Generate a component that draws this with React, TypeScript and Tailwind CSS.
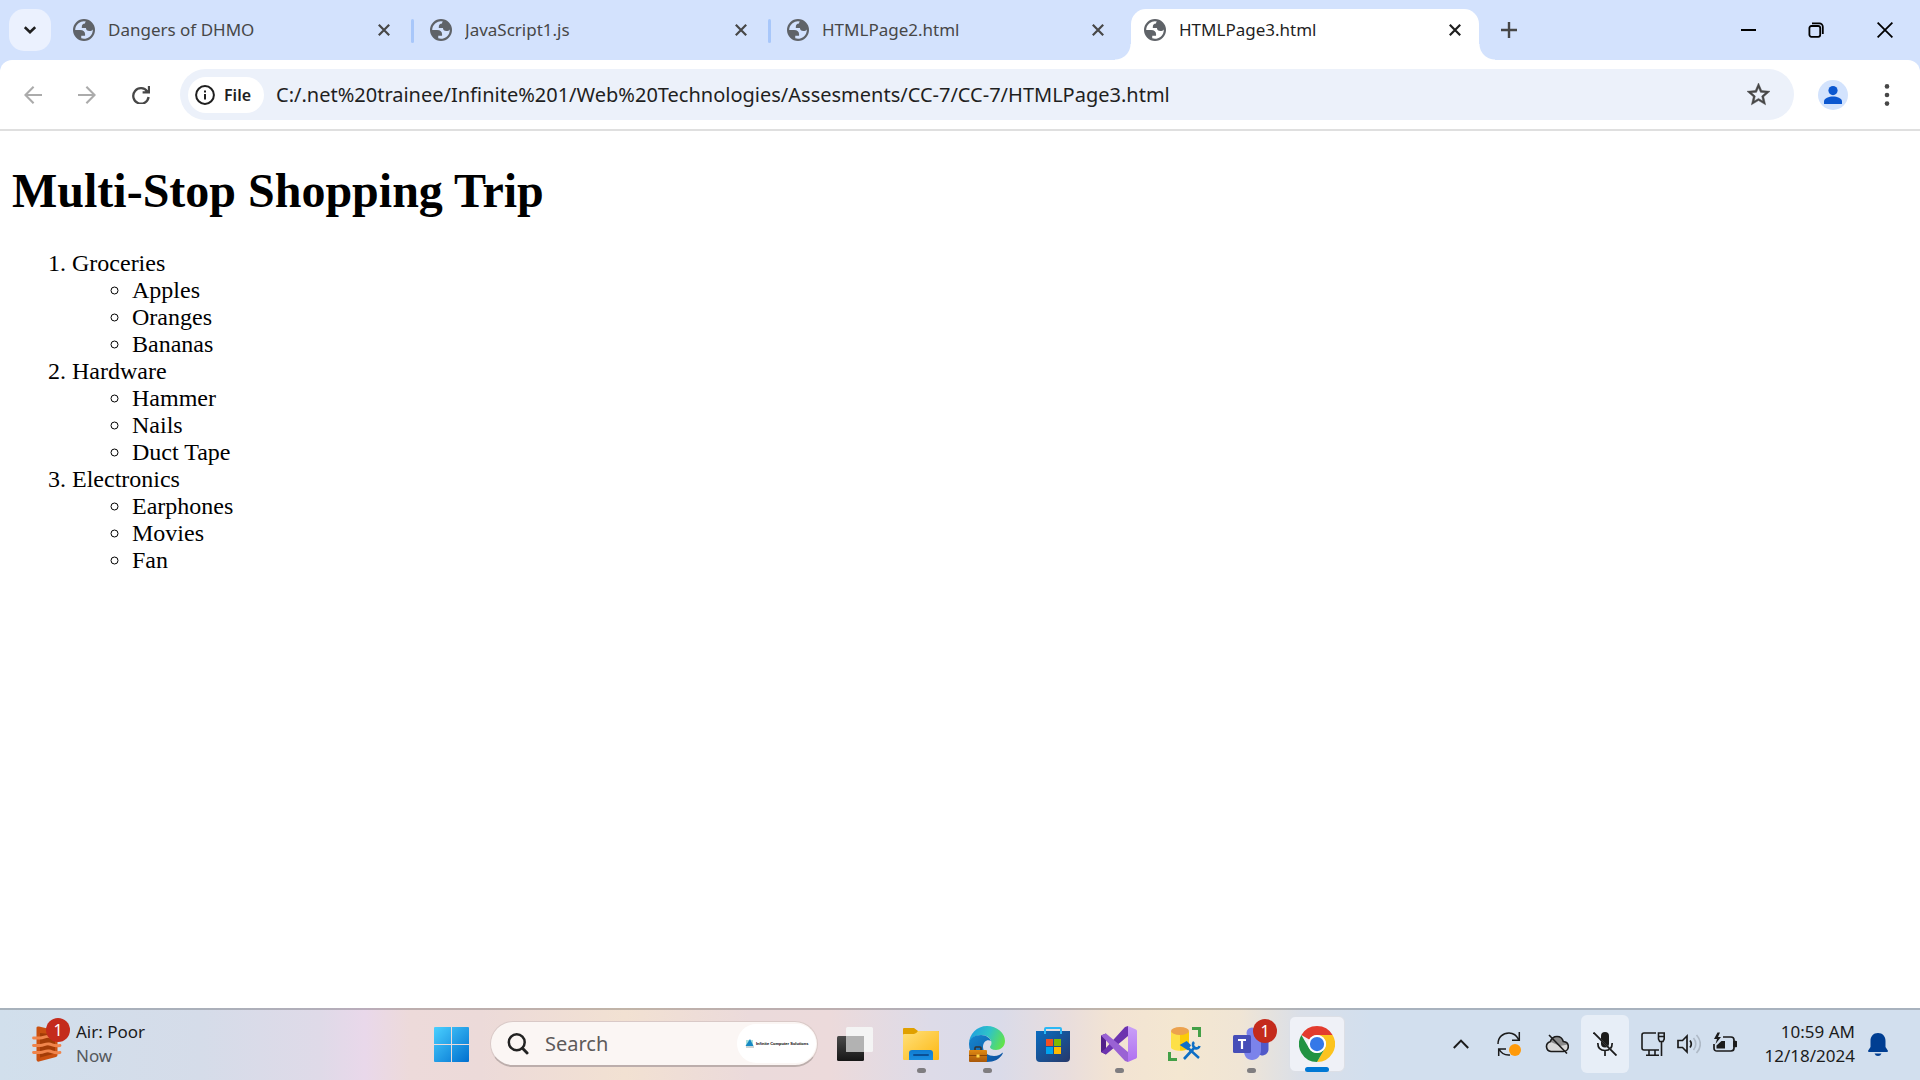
import React from "react";

const sans = "font-['Noto_Sans','Open_Sans',sans-serif]";

function Globe() {
  return (
    <svg viewBox="2 2 20 20" className="size-[22px] shrink-0" fill="#5f6368" fillRule="evenodd" aria-hidden="true">
      <path d="M12 2a10 10 0 1 0 0 20 10 10 0 0 0 0-20zM4 12h4.4c3.407.022 4.922 1.73 4.543 5.127H9.488v2.47a8.004 8.004 0 0 0 10.498-8.083C19.327 12.504 18.332 13 17 13c-2.137 0-3.206-.916-3.206-2.75h-3.748c-.274-2.728.683-4.092 2.87-4.092 0-.975.327-1.597.811-1.97A8.004 8.004 0 0 0 4 12z" />
    </svg>
  );
}

function Cross() {
  return (
    <svg viewBox="0 0 12 12" className="size-3" fill="none" stroke="currentColor" strokeWidth="2.2" aria-hidden="true">
      <path d="M.8.8l10.4 10.4M11.2.8L.8 11.2" />
    </svg>
  );
}

type TabProps = { title: string; active?: boolean; divider?: boolean };

function Tab({ title, active, divider }: TabProps) {
  return (
    <div
      className={
        active
          ? "relative flex w-[348px] items-center rounded-t-[15px] bg-white pb-[9px] pl-[13px] pr-3 text-[#1f1f1f]"
          : "relative flex w-[357px] items-center pb-[9px] pl-[13px] pr-[21px] text-[#474747]"
      }
    >
      <Globe />
      <span className="ml-[13px] flex-1 truncate text-[17px] leading-6">{title}</span>
      <button aria-label={`Close ${title}`} className="flex size-6 items-center justify-center">
        <Cross />
      </button>
      {divider && <span className="absolute right-[3px] top-[10px] h-6 w-[3px] rounded-full bg-[#a8c7fa]" />}
      {active && (
        <>
          <span className="absolute -left-4 bottom-0 size-4 bg-[radial-gradient(circle_at_0_0,transparent_15px,#fff_16px)]" />
          <span className="absolute -right-4 bottom-0 size-4 bg-[radial-gradient(circle_at_100%_0,transparent_15px,#fff_16px)]" />
        </>
      )}
    </div>
  );
}

function TabStrip() {
  return (
    <div className="flex h-[60px] pt-[9px]">
      <button aria-label="Search tabs" className="ml-[9px] flex size-[42px] items-center justify-center rounded-[15px] bg-[#ebf1fe]">
        <svg viewBox="0 0 12 8" className="h-2 w-3" fill="none" stroke="#1f1f1f" strokeWidth="2.6">
          <path d="M.8 1.2L6 6.2l5.2-5" />
        </svg>
      </button>
      <div className="ml-[9px] flex">
        <Tab title="Dangers of DHMO" divider />
        <Tab title="JavaScript1.js" divider />
        <Tab title="HTMLPage2.html" />
        <Tab title="HTMLPage3.html" active />
      </div>
      <button aria-label="New tab" className="ml-[9px] flex size-[42px] items-center justify-center">
        <svg viewBox="0 0 16 16" className="size-4" stroke="#474747" strokeWidth="2.4">
          <path d="M8 0v16M0 8h16" />
        </svg>
      </button>
      <div className="ml-auto -mt-[9px] flex h-[60px]">
        <button aria-label="Minimize" className="flex w-[68px] items-center justify-center">
          <span className="h-[2px] w-[15px] bg-black" />
        </button>
        <button aria-label="Restore" className="flex w-[68px] items-center justify-center">
          <svg viewBox="0 0 16 16" className="size-4" fill="none" stroke="#000" strokeWidth="1.8">
            <rect x="1.4" y="4" width="10.8" height="10.8" rx="2" />
            <path d="M4 1.4h7.4a3.4 3.4 0 0 1 3.4 3.4V12" />
          </svg>
        </button>
        <button aria-label="Close" className="flex w-[70px] items-center justify-center">
          <svg viewBox="0 0 16 16" className="size-4" stroke="#000" strokeWidth="1.8">
            <path d="M.6.6l14.8 14.8M15.4.6L.6 15.4" />
          </svg>
        </button>
      </div>
    </div>
  );
}

function Toolbar() {
  return (
    <div className="flex h-[71px] items-center rounded-t-[12px] border-b-2 border-[#dfdfdf] bg-white pl-[6px]">
      <button aria-label="Back" className="flex w-[54px] justify-center text-[#ababab]">
        <svg viewBox="0 0 18 18" className="size-[18px]" fill="none" stroke="currentColor" strokeWidth="2.1">
          <path d="M18 9H1.8M9.6.8L1.4 9l8.2 8.2" />
        </svg>
      </button>
      <button aria-label="Forward" className="flex w-[54px] justify-center text-[#ababab]">
        <svg viewBox="0 0 18 18" className="size-[18px]" fill="none" stroke="currentColor" strokeWidth="2.1">
          <path d="M0 9h16.2M8.4.8L16.6 9l-8.2 8.2" />
        </svg>
      </button>
      <button aria-label="Reload" className="flex w-[54px] justify-center text-[#474747]">
        <svg viewBox="0 0 18 18" className="size-[18px]" fill="none" stroke="currentColor" strokeWidth="2.3">
          <path d="M15.3 5.5A7.7 7.7 0 1 0 16.6 11M17 0v6.4h-6.4" />
        </svg>
      </button>
      <div className="ml-3 flex h-[51px] flex-1 items-center rounded-full bg-[#ecf1fa] pl-2 pr-[18px]">
        <button className="flex h-9 w-[76px] items-center rounded-full bg-white pl-[7px] text-base font-semibold text-[#1f1f1f]">
          <svg viewBox="0 0 20 20" className="mr-[9px] size-5" fill="none" stroke="#1f1f1f" strokeWidth="2">
            <circle cx="10" cy="10" r="8.9" />
            <path d="M10 9v5.6M10 5.4v2" />
          </svg>
          File
        </button>
        <input
          aria-label="Address"
          className="ml-3 min-w-0 flex-1 bg-transparent text-[20px] text-[#1f1f1f] outline-none"
          defaultValue="C:/.net%20trainee/Infinite%201/Web%20Technologies/Assesments/CC-7/CC-7/HTMLPage3.html"
        />
        <button aria-label="Bookmark this tab" className="flex size-9 items-center justify-center">
          <svg viewBox="2 2 20 20" className="size-[23px]" fill="#474747" stroke="#474747" strokeWidth=".4">
            <path d="M22 9.24l-7.19-.62L12 2 9.19 8.63 2 9.24l5.46 4.73L5.82 21 12 17.27 18.18 21l-1.63-7.03L22 9.24zM12 15.4l-3.76 2.27 1-4.28-3.32-2.88 4.38-.38L12 6.1l1.71 4.04 4.38.38-3.32 2.88 1 4.28L12 15.4z" />
          </svg>
        </button>
      </div>
      <button aria-label="Profile" className="ml-6 flex size-[30px] items-center justify-center rounded-full bg-[#d3e3fd]">
        <svg viewBox="0 0 18 18" className="size-[18px]" fill="#0b57d0">
          <circle cx="9" cy="4.6" r="4.6" />
          <path d="M0 18v-2.8C0 12 5 10.4 9 10.4s9 1.6 9 4.8V18z" />
        </svg>
      </button>
      <button aria-label="Menu" className="ml-[21px] mr-[15px] flex w-9 justify-center">
        <svg viewBox="0 0 6 22" className="h-[22px] w-[6px]" fill="#474747">
          <circle cx="3" cy="2.4" r="2.3" />
          <circle cx="3" cy="11" r="2.3" />
          <circle cx="3" cy="19.6" r="2.3" />
        </svg>
      </button>
    </div>
  );
}

const stops = [
  { name: "Groceries", items: ["Apples", "Oranges", "Bananas"] },
  { name: "Hardware", items: ["Hammer", "Nails", "Duct Tape"] },
  { name: "Electronics", items: ["Earphones", "Movies", "Fan"] },
];

function Page() {
  return (
    <main className="flex-1 bg-white px-3 py-8 font-['Liberation_Serif',serif] text-2xl leading-[27px] text-black">
      <h1 className="mb-8 text-5xl font-bold leading-[55px]">Multi-Stop Shopping Trip</h1>
      <ol className="list-decimal pl-[60px]">
        {stops.map((s) => (
          <li key={s.name}>
            {s.name}
            <ul className="list-[circle] pl-[60px]">
              {s.items.map((i) => (
                <li key={i}>{i}</li>
              ))}
            </ul>
          </li>
        ))}
      </ol>
    </main>
  );
}

function Badge() {
  return <span className="absolute flex size-6 items-center justify-center rounded-full bg-[#c42b1c] text-base leading-6 text-white">1</span>;
}

function TaskButton({ label, running, children }: { label: string; running?: boolean; children: React.ReactNode }) {
  return (
    <button aria-label={label} className="relative flex w-[66px] items-center justify-center">
      {children}
      {running && <span className="absolute bottom-[5px] h-[5px] w-[9px] rounded-full bg-[#7f7d80]" />}
    </button>
  );
}

const icon = "size-9";

function Taskbar() {
  return (
    <footer className="flex h-[72px] border-t-2 border-black/20 bg-[linear-gradient(90deg,#d1dfec_0,#d5dce9_200px,#dfdae8_320px,#e9d8ea_365px,#eddada_410px,#ecdad9_480px,#f2e1d2_625px,#ebdadb_750px,#ecdadb_830px,#dddbe8_930px,#dadbe9_1000px,#e8dddd_1065px,#f2e3d3_1110px,#f4e7d1_1180px,#f0e5d5_1240px,#dadfe8_1300px,#d2dfee_1370px,#d2dfee_100%)] bg-clip-border pb-[2px] text-[17px] leading-6 text-[#1b1b1b]">
      <button className="flex w-[418px] items-center pl-8 text-left">
        <span className="relative">
          <svg viewBox="0 0 30 36" className="h-9 w-[30px]" fill="none">
            <path d="M4.5 1.5Q5 0 7 .6L24 4.5q1.5.4 1.5 2V29q0 1.5-1.5 2L7 35.6q-2 .4-2.500-1.600z" fill="#ca5010" />
            <path d="M8 7l15 1.500v19L8 31.500z" fill="#a33c07" />
            <path d="M1.500 12H8c4 0 5-2 9-1.500 4 .7 5 2.500 11 1.500M1.500 19.500H8c4 0 5-2 9-1.500 4 .7 5 2.500 11 1.500M1.500 26.500H8c4 0 5-2 9-1.500 4 .7 5 2.500 11 1.500" stroke="#f0854c" strokeWidth="2.800" strokeLinecap="round" />
          </svg>
          <span className="absolute -top-2 left-[14px]"><Badge /></span>
        </span>
        <span className="ml-[14px]">
          <span className="block">Air: Poor</span>
          <span className="block text-[#55585c]">Now</span>
        </span>
      </button>

      <TaskButton label="Start">
        <svg viewBox="0 0 35 35" className="size-[35px]">
          <defs>
            <linearGradient id="win" x1="0" y1="0" x2="1" y2="1" gradientUnits="objectBoundingBox">
              <stop offset="0" stopColor="#4ad0ff" />
              <stop offset="1" stopColor="#006fcf" />
            </linearGradient>
          </defs>
          <path d="M1 0h16v17H0V1q0-1 1-1zM18 0h16q1 0 1 1v16H18zM0 18h17v17H1q-1 0-1-1zM18 18h17v16q0 1-1 1H18z" fill="url(#win)" />
        </svg>
      </TaskButton>

      <div className="ml-[6px] mr-1 flex h-[46px] w-[328px] items-center self-center rounded-full border border-[#d9c9c7] border-b-2 border-b-[#bcaeac] bg-[#fbf6f4] pl-4">
        <svg viewBox="0 0 22 23" className="size-[22px]" fill="none" stroke="#222" strokeWidth="2.600" strokeLinecap="round">
          <circle cx="9.700" cy="9.700" r="8.300" />
          <path d="M15.700 16l4.800 5" strokeWidth="3" />
        </svg>
        <input aria-label="Search" placeholder="Search" className="ml-4 w-[150px] min-w-0 flex-1 bg-transparent text-[20px] outline-none placeholder:text-[#5d5a5a]" />
        <span className="mr-px flex h-[39px] w-[79px] items-center rounded-full bg-white pl-2">
          <svg viewBox="0 0 9 9" className="size-[9px]">
            <path d="M1 1h7v6H1z" fill="#a8e0dc" />
            <path d="M5 0l3.500 7H.500z" fill="#1689c4" />
            <path d="M1 8h8" stroke="#9aa" strokeWidth="1" />
          </svg>
          <span className="ml-0.5 whitespace-nowrap font-['Liberation_Sans',sans-serif] text-[4px] font-bold leading-none text-black">Infinite Computer Solutions</span>
        </span>
      </div>

      <TaskButton label="Task view">
        <svg viewBox="0 0 36 36" className={icon}>
          <defs>
            <linearGradient id="tv" x1="0" y1="0" x2="0" y2="1"><stop stopColor="#4a4a4a" /><stop offset="1" stopColor="#161616" /></linearGradient>
          </defs>
          <rect x="0" y="10" width="27" height="25" rx="1.500" fill="url(#tv)" />
          <rect x="9" y="1" width="27" height="25" rx="1.500" fill="#f4f4f4" />
          <path d="M9 10h18v16H10q-1 0-1-1z" fill="#b2b2b2" />
        </svg>
      </TaskButton>

      <TaskButton label="File Explorer" running>
        <svg viewBox="0 0 36 36" className={icon}>
          <defs>
            <linearGradient id="fe" x1="0" y1="0" x2="1" y2="1"><stop stopColor="#ffe07a" /><stop offset="1" stopColor="#fdb813" /></linearGradient>
            <linearGradient id="fb" x1="0" y1="0" x2="0" y2="1"><stop stopColor="#0f7bd0" /><stop offset="1" stopColor="#1b8fe0" /></linearGradient>
          </defs>
          <path d="M0 3q0-1 1-1h10l4 3h20q1 0 1 1v8H0z" fill="#e0a000" />
          <path d="M0 9q0-1 1-1h10q2 0 4-3h20q1 0 1 1v27q0 1-1 1H1q-1 0-1-1z" fill="url(#fe)" />
          <path d="M6 34v-7q0-3 3-3h18q3 0 3 3v7z" fill="url(#fb)" />
          <path d="M11 29h14" stroke="#0a4f94" strokeWidth="2" strokeLinecap="round" />
        </svg>
      </TaskButton>

      <TaskButton label="Edge" running>
        <svg viewBox="0 0 36 36" className={icon}>
          <defs>
            <linearGradient id="e1" x1="0" y1=".3" x2="1" y2=".6"><stop stopColor="#1f9ee0" /><stop offset=".5" stopColor="#2fc3c8" /><stop offset="1" stopColor="#62e34a" /></linearGradient>
            <linearGradient id="e2" x1="0" y1="0" x2="1" y2="1"><stop stopColor="#1687cf" /><stop offset="1" stopColor="#0c4f9e" /></linearGradient>
            <linearGradient id="e3" x1="0" y1="0" x2="0" y2="1"><stop stopColor="#e08a13" /><stop offset="1" stopColor="#a8570a" /></linearGradient>
          </defs>
          <path d="M0 18C0 8 8 0 18 0s18 7 18 15c0 6-5 9-9 9-4 0-6-1.500-6-3 0-1 1.500-1.500 1.500-4 0-4-4-8-10-8C6 9 0 13 0 18z" fill="url(#e1)" />
          <path d="M0 18C0 12 6 9 12 9c5 0 9 3 10 6-4-2-8 1-8 6 0 6 6 9 11 9 4 0 7-2 8-3 1-.6 1 0 .5 1C31 33 25 36 18 36 8 36 0 28 0 18z" fill="url(#e2)" />
          <path d="M6 24v-2q0-1 1-1h4q1 0 1 1v2" fill="none" stroke="#333" strokeWidth="1.600" />
          <rect x="0" y="24" width="18" height="12" rx="1" fill="url(#e3)" />
          <path d="M0 29.500h18" stroke="#8a4607" />
          <rect x="7.500" y="28.500" width="3" height="3" fill="#ffd84a" />
        </svg>
      </TaskButton>

      <TaskButton label="Microsoft Store">
        <svg viewBox="0 0 36 36" className={icon}>
          <defs>
            <linearGradient id="st" x1="0" y1="0" x2="1" y2="1"><stop stopColor="#0a6cc0" /><stop offset="1" stopColor="#27386a" /></linearGradient>
          </defs>
          <path d="M1 5h34v27q0 4-4 4H5q-4 0-4-4z" fill="url(#st)" />
          <path d="M10 8V3q0-1 1-1h14q1 0 1 1v5" fill="none" stroke="#2bb8f5" strokeWidth="2" />
          <path d="M11 13h7v7h-7z" fill="#f25022" />
          <path d="M19 13h7v7h-7z" fill="#7fba00" />
          <path d="M11 21h7v7h-7z" fill="#00a4ef" />
          <path d="M19 21h7v7h-7z" fill="#ffb900" />
        </svg>
      </TaskButton>

      <TaskButton label="Visual Studio" running>
        <svg viewBox="0 0 36 36" className={icon}>
          <defs>
            <linearGradient id="vs" x1="0" y1="0" x2="0" y2="1"><stop stopColor="#c9a0f8" /><stop offset="1" stopColor="#b070f0" /></linearGradient>
          </defs>
          <path d="M0 9.500L5 7.500v21L0 26z" fill="#52218a" />
          <path d="M5 28.500L0 26l4-3L24 1l3-1v10z" fill="#6c33af" />
          <path d="M5 7.500L0 9.500l4 4L24 35l3 1V26z" fill="#9a62d4" />
          <path d="M27 0l8 3.500q1 .5 1 1.500v26q0 1-1 1.500L27 36z" fill="url(#vs)" />
        </svg>
      </TaskButton>

      <TaskButton label="SQL Server Management Studio">
        <svg viewBox="0 0 36 36" className={icon} fill="none">
          <path d="M4 5v16c0 5 18 5 18 0V5z" fill="#fde047" />
          <path d="M13 6h9v15c0 2-4 3.600-9 3.600z" fill="#fbcc08" />
          <ellipse cx="13" cy="5" rx="9" ry="4" fill="#eca24e" />
          <path d="M25 2.500h7.500V11M2.500 26v7.500H10" stroke="#43a047" strokeWidth="3" />
          <path d="M15 19l4.500-2.500 3 3-2 3zM21 22l11 10" stroke="#0f6fc6" strokeWidth="2.400" fill="#0f6fc6" />
          <path d="M17 33l11-12m-1-5c-2 2-1 5 1 6s4 0 4.500-2" stroke="#0f6fc6" strokeWidth="2.600" />
        </svg>
      </TaskButton>

      <TaskButton label="Teams" running>
        <svg viewBox="0 0 36 36" className={icon}>
          <circle cx="19" cy="7" r="5.500" fill="#7b83eb" />
          <path d="M24 14h10q1.500 0 1.500 1.500V23c0 4-3 6.500-7 6.500l-5-2z" fill="#5059c9" />
          <path d="M12 12h15q1 0 1 1.500V24c0 6-4 10-9 10s-8-4-8-9z" fill="#7b83eb" />
          <rect x="0" y="9" width="18" height="18" rx="1.500" fill="#464eb8" />
          <path d="M5 14h8M9 14v9" stroke="#fff" strokeWidth="2.200" />
        </svg>
        <span className="absolute left-[35px] top-[9px]"><Badge /></span>
      </TaskButton>

      <button aria-label="Chrome" className="relative ml-[5px] flex h-14 w-14 items-center justify-center self-center rounded-md border border-[#dcdfe6] bg-[#eff1f7]">
        <svg viewBox="0 0 48 48" className={icon}>
          <path d="M24 0a24 24 0 0 1 20.800 12H24a12 12 0 0 0-10.400 6L3.200 12A24 24 0 0 1 24 0z" fill="#e33b2e" />
          <path d="M44.800 12A24 24 0 0 1 24 48l10.400-18A12 12 0 0 0 34.400 18 12 12 0 0 0 24 12z" fill="#fcc31e" />
          <path d="M3.200 12l10.400 18A12 12 0 0 0 24 36c4 0 7-1 10.400-6L24 48A24 24 0 0 1 3.200 12z" fill="#229342" />
          <circle cx="24" cy="24" r="12" fill="#fff" />
          <circle cx="24" cy="24" r="9.500" fill="#3578e8" />
        </svg>
        <span className="absolute -bottom-px h-[5px] w-6 rounded-full bg-[#0078d4]" />
      </button>

      <div className="ml-auto flex items-center">
        <button aria-label="Show hidden icons" className="flex w-12 justify-center">
          <svg viewBox="0 0 16 10" className="h-[10px] w-4" fill="none" stroke="#1b1b1b" strokeWidth="2"><path d="M.8 9L8 1.600 15.200 9" /></svg>
        </button>
        <button aria-label="Update" className="flex w-12 justify-center">
          <svg viewBox="0 0 24 24" className="size-6" fill="none" stroke="#1b1b1b" strokeWidth="1.500">
            <path d="M1 12C1 5 6 1 12 1c5 0 8 3 10 7M22.300 0v8.300H15M1.700 24v-7H9M2 17c2 4 6 6.500 11 6" />
            <circle cx="18" cy="18" r="6" fill="#ff9a0a" stroke="none" />
          </svg>
        </button>
        <button aria-label="OneDrive" className="flex w-12 justify-center">
          <svg viewBox="0 0 24 20" className="h-5 w-6" fill="none">
            <path d="M6 17.500a5 5 0 0 1-.8-9.800C6.500 4 9 2.500 12 2.500s5.500 2 6.300 5c3 .3 5 2.300 5 5s-2 5-5 5z" fill="#d8d8d8" />
            <path d="M5.200 7.700C6.500 4 9 2.500 12 2.500s5.500 2 6.300 5c2 .2 3.500 1 4.500 3L15 12z" fill="#8b8b8b" />
            <path d="M6 17.500a5 5 0 0 1-.8-9.800C6.500 4 9 2.500 12 2.500s5.500 2 6.300 5c3 .3 5 2.300 5 5s-2 5-5 5z" stroke="#1b1b1b" strokeWidth="1.600" />
            <path d="M4 1l18 18.500" stroke="#1b1b1b" strokeWidth="1.600" />
          </svg>
        </button>
        <button aria-label="Microphone muted" className="flex h-[58px] w-12 items-center justify-center rounded-md bg-[#e7eef7]">
          <svg viewBox="0 0 24 24" className="size-6" fill="none" stroke="#1b1b1b" strokeWidth="1.700">
            <rect x="8" y="0" width="8" height="15.500" rx="4" fill="#1b1b1b" stroke="none" />
            <path d="M4.800 11c0 5 3 7.500 7.200 7.500s7.200-2.500 7.200-7.500M12 18.500V24" />
            <path d="M1.500 1.500L24 24" stroke="#e7eef7" strokeWidth="1.500" />
            <path d="M.5.5l23 23" strokeWidth="1.900" />
          </svg>
        </button>
        <button aria-label="Network, volume and battery" className="ml-3 flex items-center gap-3">
          <svg viewBox="0 0 24 24" className="size-6" fill="none" stroke="#1b1b1b" strokeWidth="1.600">
            <path d="M15 1H3Q1 1 1 3v13q0 2 2 2h15M8 18v5M14 18v5M5 23.200h13M17.500 1h5.700v6l-1.200 2.500h-3.300L17.500 7zM17.500 4.500h5.700M20.500 9.500V24" />
          </svg>
          <svg viewBox="0 0 24 24" className="size-6" fill="none" stroke="#1b1b1b" strokeWidth="1.700">
            <path d="M1 8.500h4.500L10 4v16l-4.500-4.500H1zM13 8.500c1.500 2 1.500 5 0 7" />
            <path d="M16.500 6c3 3.500 3 8.500 0 12M19.500 3c5 5.500 5 12.500 0 18" stroke="#aeb9c6" />
          </svg>
          <svg viewBox="0 0 24 24" className="size-6" fill="none" stroke="#1b1b1b" strokeWidth="1.700">
            <path d="M10 5h8q3 0 3 3v8q0 3-3 3H4q-3 0-3-3v-4" />
            <path d="M21 9.500h1.500q1 0 1 1v3q0 1-1 1H21z" fill="#1b1b1b" />
            <path d="M3.500 16.500v-3l5-4.500h3.500v7.500z" fill="#1b1b1b" stroke="none" />
            <path d="M4.500.5L1 7h3l-1.500 5L8 5H5l2-4.500z" fill="#1b1b1b" stroke="none" />
          </svg>
        </button>
        <div className="ml-[22px] w-24 text-right">
          <div>10:59 AM</div>
          <div className="whitespace-nowrap">12/18/2024</div>
        </div>
        <button aria-label="Notifications" className="ml-[13px] mr-8">
          <svg viewBox="0 0 20 23" className="h-[23px] w-5" fill="#003e92">
            <path d="M10 0c4.600 0 7.500 3.500 7.500 8v6l2.300 3.500q.5 1.300-.8 1.500H1q-1.300-.2-.8-1.500L2.500 14V8c0-4.500 2.900-8 7.500-8zM6.500 20.500h7Q12.500 23 10 23t-3.500-2.500z" />
          </svg>
        </button>
      </div>
    </footer>
  );
}

export default function App() {
  return (
    <div className={`flex min-h-screen flex-col bg-[#d3e2fd] ${sans}`}>
      <TabStrip />
      <Toolbar />
      <Page />
      <Taskbar />
    </div>
  );
}
